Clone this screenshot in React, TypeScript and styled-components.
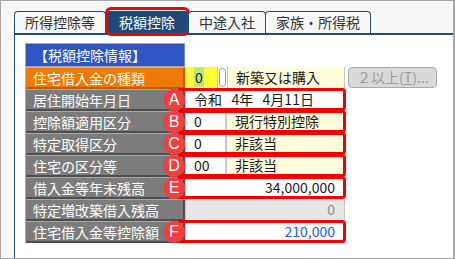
import React from 'react';
import styled, { createGlobalStyle, css } from 'styled-components';

const GlobalStyle = createGlobalStyle`
  html, body {
    margin: 0;
    padding: 0;
    background: #ffffff;
  }
  body {
    font-family: "Noto Sans CJK JP", "Noto Sans", sans-serif;
  }
`;

const Frame = styled.div`
  width: 455px;
  height: 259px;
  box-sizing: border-box;
  border: 1px solid #a6a6a6;
  border-right-width: 2px;
  background: #f7f7f7;
  display: flex;
  flex-direction: column;
  padding: 10px 0 0 13px;
`;

const TabBar = styled.div`
  display: flex;
  height: 22px;
`;

const Tab = styled.div<{ $active?: boolean }>`
  position: relative;
  box-sizing: border-box;
  height: 22px;
  padding: 0 10px;
  border: 1px solid #1f4e79;
  border-bottom: none;
  border-radius: 4px 4px 0 0;
  margin-left: -1px;
  font-size: 14px;
  line-height: 21px;
  color: #333333;
  background: #f7f7f7;
  white-space: nowrap;

  &:first-child {
    margin-left: 0;
  }

  ${(p) =>
    p.$active &&
    css`
      padding: 0 13px;
      background: #1f4a76;
      color: #ffffff;

      &::after {
        content: '';
        position: absolute;
        top: -5px;
        bottom: -3px;
        left: -1px;
        right: -2px;
        border: 3px solid #f00000;
        border-radius: 6px;
      }
    `}
`;

const Panel = styled.div`
  flex: 1;
  background: #ffffff;
  border-top: 2px solid #1f4e79;
  border-left: 1px solid #1f4e79;
  padding: 8px 0 0 10px;
`;

const Table = styled.div`
  display: flex;
  flex-direction: column;
  width: 320px;
`;

const Row = styled.div<{ $h?: number }>`
  display: flex;
  height: ${(p) => p.$h ?? 22}px;
`;

const labelTones = {
  header: css`
    background: #2f55c5;
    border: 1px solid #9aa6c8;
    border-right-color: #8089a8;
  `,
  orange: css`
    background: #ee7b00;
    box-shadow: inset 1px 1px 0 #f6a955, inset -2px -2px 0 #b85e00;
  `,
  gray: css`
    background: #7c7c7c;
    box-shadow: inset 1px 1px 0 #a8a8a8, inset -2px -2px 0 #4e4e4e;
  `,
};

const Label = styled.div<{ $tone: keyof typeof labelTones }>`
  flex: none;
  box-sizing: border-box;
  width: 160px;
  padding-left: 8px;
  font-size: 14px;
  line-height: 22px;
  color: #ffffff;
  white-space: nowrap;
  ${(p) => labelTones[p.$tone]}
`;

const Cell = styled.div<{ $marked?: boolean }>`
  position: relative;
  flex: none;
  display: flex;
  width: 160px;

  ${(p) =>
    p.$marked &&
    css`
      &::after {
        content: '';
        position: absolute;
        top: -1px;
        bottom: 0;
        left: -8px;
        right: -1px;
        border: 3px solid #f20000;
        border-radius: 4px;
        z-index: 1;
      }
    `}
`;

const fieldKinds = {
  yellow: css`
    background: #ffff33;
  `,
  white: css`
    background: #ffffff;
  `,
  cream: css`
    background: #fffcdc;
  `,
  gray: css`
    background: #e6e6e6;
    color: #8a8a8a;
  `,
};

const Field = styled.div<{
  $kind: keyof typeof fieldKinds;
  $w?: number;
  $right?: boolean;
  $color?: string;
}>`
  box-sizing: border-box;
  ${(p) => (p.$w ? `width: ${p.$w}px; flex: none;` : 'flex: 1;')}
  height: 100%;
  border: 1px solid #c8c8c8;
  border-top: none;
  padding: 0 ${(p) => (p.$right ? '9px' : '0')} 0 ${(p) => (p.$right ? '0' : '8px')};
  text-align: ${(p) => (p.$right ? 'right' : 'left')};
  font-size: 14px;
  line-height: 21px;
  color: ${(p) => p.$color ?? '#1a1a1a'};
  white-space: pre;
  overflow: hidden;
  ${(p) => fieldKinds[p.$kind]}
`;

const Highlight = styled.span`
  background: #b8e878;
  padding: 0 1px;
`;

const Spin = styled.div`
  flex: none;
  box-sizing: border-box;
  width: 7px;
  height: 19px;
  margin: 1px 1px 0 1px;
  border: 1px solid #9a9a9a;
  border-radius: 4px;
  background: #ffffff;
`;

const Badge = styled.div`
  position: absolute;
  left: -22px;
  top: 50%;
  transform: translateY(-50%);
  width: 22px;
  height: 22px;
  border-radius: 50%;
  background: #f23e3e;
  color: #ffffff;
  font-family: "Liberation Sans", Arial, sans-serif;
  font-size: 16px;
  line-height: 22px;
  text-align: center;
  z-index: 2;
`;

const MoreButton = styled.div`
  flex: none;
  box-sizing: border-box;
  width: 89px;
  height: 21px;
  margin-left: 3px;
  border: 1px solid #a8a8a8;
  border-radius: 4px;
  background: #d9d9d9;
  color: #9c9c9c;
  font-size: 14px;
  line-height: 19px;
  padding-left: 8px;
  white-space: nowrap;

  u {
    text-decoration: underline;
  }
`;

type Mark = 'A' | 'B' | 'C' | 'D' | 'E' | 'F';

const Marked: React.FC<{ mark?: Mark; children: React.ReactNode }> = ({ mark, children }) => (
  <Cell $marked={!!mark}>
    {mark && <Badge>{mark}</Badge>}
    {children}
  </Cell>
);

export default function App() {
  return (
    <>
      <GlobalStyle />
      <Frame>
        <TabBar>
          <Tab>所得控除等</Tab>
          <Tab $active>税額控除</Tab>
          <Tab>中途入社</Tab>
          <Tab>家族・所得税</Tab>
        </TabBar>
        <Panel>
          <Table>
            <Row $h={24}>
              <Label $tone="header">【税額控除情報】</Label>
            </Row>
            <Row>
              <Label $tone="orange">住宅借入金の種類</Label>
              <Cell>
                <Field $kind="yellow" $w={33}>
                  <Highlight>0</Highlight>
                </Field>
                <Spin />
                <Field $kind="cream">新築又は購入</Field>
              </Cell>
              <MoreButton>
                ２以上(<u>T</u>)...
              </MoreButton>
            </Row>
            <Row>
              <Label $tone="gray">居住開始年月日</Label>
              <Marked mark="A">
                <Field $kind="white">{'令和   4年   4月11日'}</Field>
              </Marked>
            </Row>
            <Row>
              <Label $tone="gray">控除額適用区分</Label>
              <Marked mark="B">
                <Field $kind="white" $w={41}>0</Field>
                <Field $kind="cream">現行特別控除</Field>
              </Marked>
            </Row>
            <Row>
              <Label $tone="gray">特定取得区分</Label>
              <Marked mark="C">
                <Field $kind="white" $w={41}>0</Field>
                <Field $kind="cream">非該当</Field>
              </Marked>
            </Row>
            <Row>
              <Label $tone="gray">住宅の区分等</Label>
              <Marked mark="D">
                <Field $kind="white" $w={41}>00</Field>
                <Field $kind="cream">非該当</Field>
              </Marked>
            </Row>
            <Row>
              <Label $tone="gray">借入金等年末残高</Label>
              <Marked mark="E">
                <Field $kind="white" $right>34,000,000</Field>
              </Marked>
            </Row>
            <Row>
              <Label $tone="gray">特定増改築借入残高</Label>
              <Marked>
                <Field $kind="gray" $right>0</Field>
              </Marked>
            </Row>
            <Row>
              <Label $tone="gray">住宅借入金等控除額</Label>
              <Marked mark="F">
                <Field $kind="white" $right $color="#1c63dc">210,000</Field>
              </Marked>
            </Row>
          </Table>
        </Panel>
      </Frame>
    </>
  );
}
